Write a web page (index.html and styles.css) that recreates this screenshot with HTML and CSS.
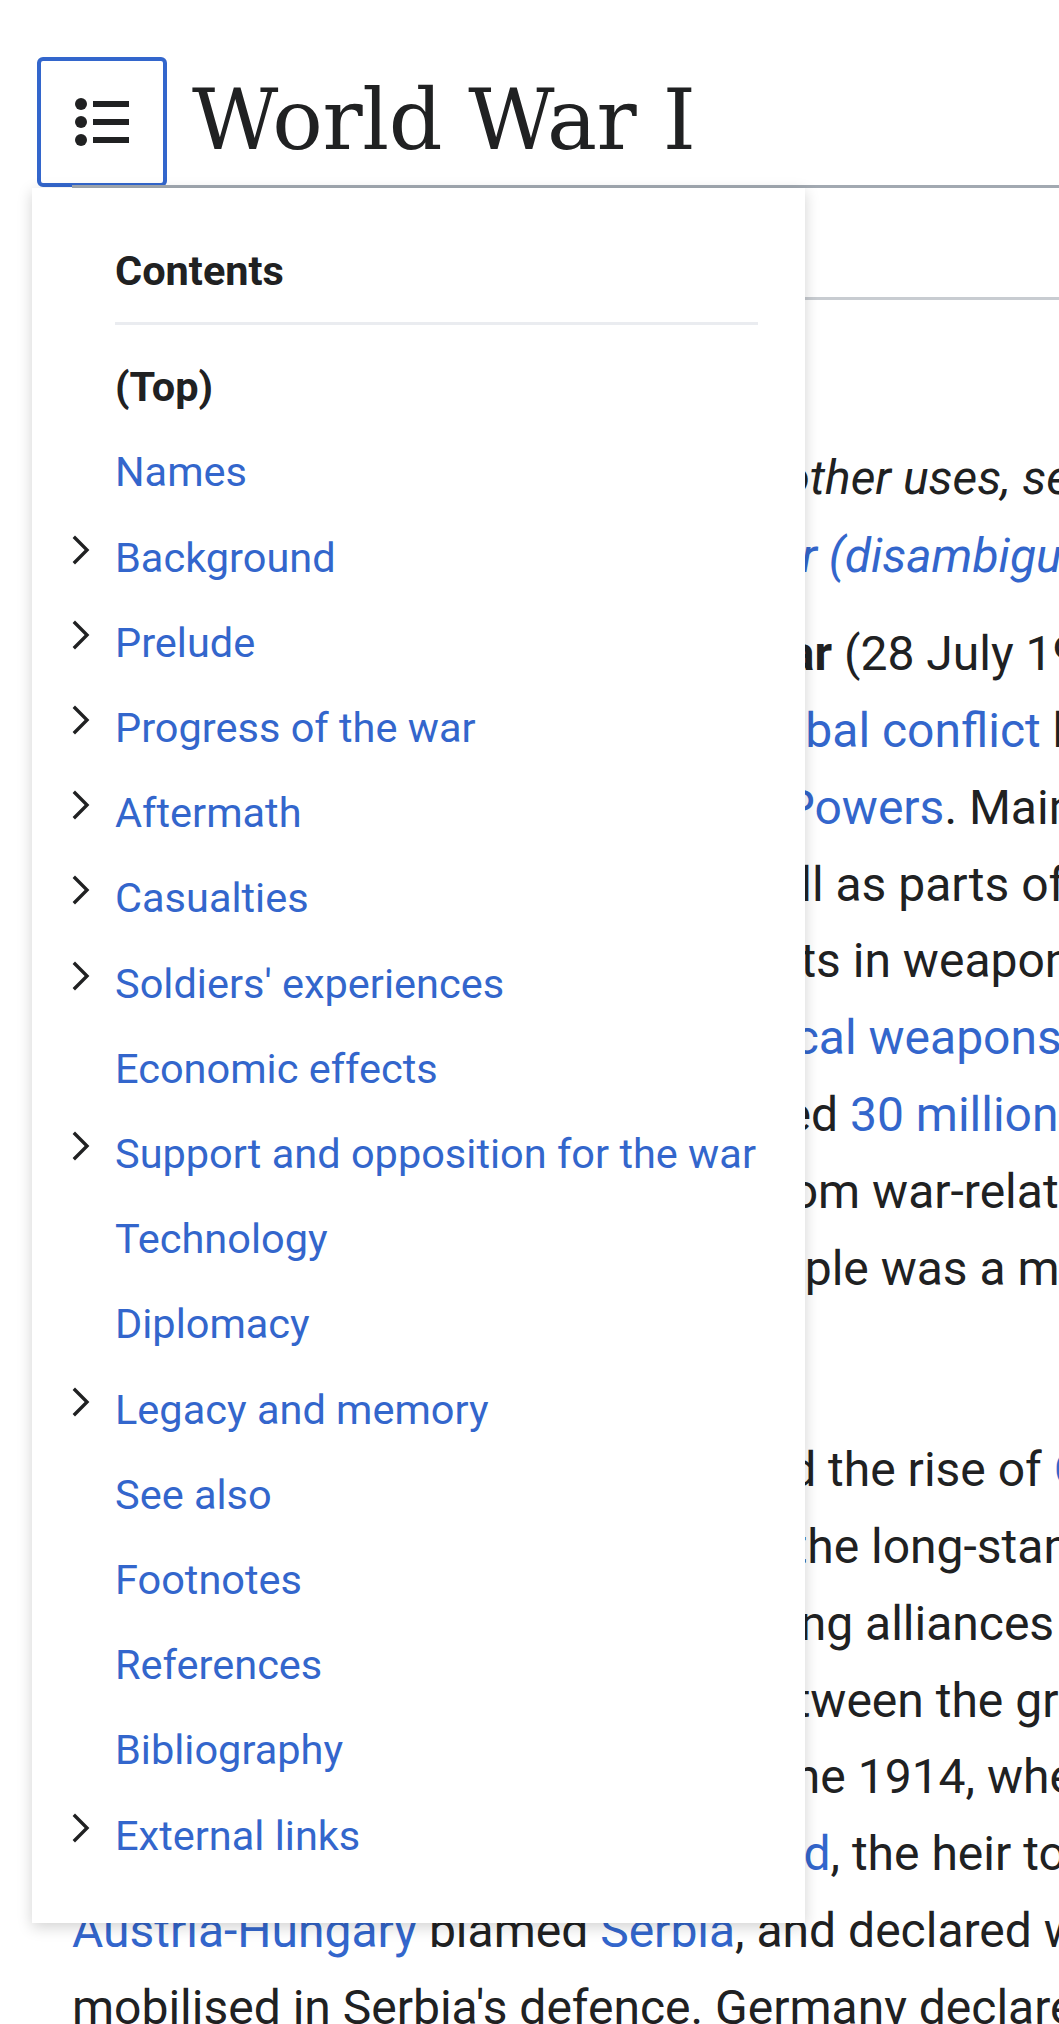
FILE: index.html
```html
<!DOCTYPE html>
<html lang="en">
<head>
<meta charset="utf-8">
<title>World War I - Wikipedia</title>

<link rel="stylesheet" href="styles.css">
</head>

<body>
<div class="page">

	<!-- title -->
	<header class="title-bar">
		<button class="toc-button" type="button" title="Hide contents">
			<svg viewBox="0 0 20 20" width="60" height="60" aria-hidden="true">
				<circle cx="3" cy="4" r="2"/>
				<circle cx="3" cy="10" r="2"/>
				<circle cx="3" cy="16" r="2"/>
				<path d="M7 3h12v2H7zm0 6h12v2H7zm0 6h12v2H7z"/>
			</svg>
		</button>
		<h1 class="title">World War I</h1>
	</header>

	<div class="tabs"></div>

	<!-- contents dropdown -->
	<nav class="toc">
		<h2 class="toc-title">Contents</h2>
		<ul class="toc-list">
			<li class="toc-top"><span class="toc-toggle"></span><a href="#">(Top)</a></li>
			<li><span class="toc-toggle"></span><a href="#Names">Names</a></li>
			<li><span class="toc-toggle"><svg viewBox="0 0 20 20"><path d="M4.75 2.5 12.25 10l-7.5 7.5 1.5 1.5 9-9-9-9z"/></svg></span><a href="#Background">Background</a></li>
			<li><span class="toc-toggle"><svg viewBox="0 0 20 20"><path d="M4.75 2.5 12.25 10l-7.5 7.5 1.5 1.5 9-9-9-9z"/></svg></span><a href="#Prelude">Prelude</a></li>
			<li><span class="toc-toggle"><svg viewBox="0 0 20 20"><path d="M4.75 2.5 12.25 10l-7.5 7.5 1.5 1.5 9-9-9-9z"/></svg></span><a href="#Progress_of_the_war">Progress of the war</a></li>
			<li><span class="toc-toggle"><svg viewBox="0 0 20 20"><path d="M4.75 2.5 12.25 10l-7.5 7.5 1.5 1.5 9-9-9-9z"/></svg></span><a href="#Aftermath">Aftermath</a></li>
			<li><span class="toc-toggle"><svg viewBox="0 0 20 20"><path d="M4.75 2.5 12.25 10l-7.5 7.5 1.5 1.5 9-9-9-9z"/></svg></span><a href="#Casualties">Casualties</a></li>
			<li><span class="toc-toggle"><svg viewBox="0 0 20 20"><path d="M4.75 2.5 12.25 10l-7.5 7.5 1.5 1.5 9-9-9-9z"/></svg></span><a href="#Soldiers'_experiences">Soldiers' experiences</a></li>
			<li><span class="toc-toggle"></span><a href="#Economic_effects">Economic effects</a></li>
			<li><span class="toc-toggle"><svg viewBox="0 0 20 20"><path d="M4.75 2.5 12.25 10l-7.5 7.5 1.5 1.5 9-9-9-9z"/></svg></span><a href="#Support_and_opposition_for_the_war">Support and opposition for the war</a></li>
			<li><span class="toc-toggle"></span><a href="#Technology">Technology</a></li>
			<li><span class="toc-toggle"></span><a href="#Diplomacy">Diplomacy</a></li>
			<li><span class="toc-toggle"><svg viewBox="0 0 20 20"><path d="M4.75 2.5 12.25 10l-7.5 7.5 1.5 1.5 9-9-9-9z"/></svg></span><a href="#Legacy_and_memory">Legacy and memory</a></li>
			<li><span class="toc-toggle"></span><a href="#See_also">See also</a></li>
			<li><span class="toc-toggle"></span><a href="#Footnotes">Footnotes</a></li>
			<li><span class="toc-toggle"></span><a href="#References">References</a></li>
			<li><span class="toc-toggle"></span><a href="#Bibliography">Bibliography</a></li>
			<li><span class="toc-toggle"><svg viewBox="0 0 20 20"><path d="M4.75 2.5 12.25 10l-7.5 7.5 1.5 1.5 9-9-9-9z"/></svg></span><a href="#External_links">External links</a></li>
		</ul>
	</nav>

	<!-- article -->
	<main class="content">
		<div class="tagline">From Wikipedia, the free encyclopedia</div>

		<div class="hatnote">
			"Great War" redirects here. For other uses, see <a href="#">Great War<br>
			(disambiguation)</a> and <a href="#">World War (disambiguation)</a>.
		</div>

		<p>
			<b>World War I</b><sup class="ref">[a]</sup> or the <b>First World War</b> (28 July 1914 – 11 November 1918), also<br>
			known as the <b>Great War</b>, was a <a href="#">global conflict</a> between two coalitions: the<br>
			<a href="#">Allies</a>, or <a href="#">Entente</a>, and the <a href="#">Central Powers</a>. Main areas of conflict included<br>
			Europe and the <a href="#">Middle East</a>, as well as parts of <a href="#">Africa</a> and the <a href="#">Asia-Pacific</a>.<br>
			The war saw decisive developments in weaponry including <a href="#">tanks</a>, <a href="#">aircraft</a>,<br>
			<a href="#">artillery</a>, <a href="#">machine guns</a>, and <a href="#">chemical weapons</a>. One of the deadliest conflicts<br>
			in history, it resulted in an estimated <a href="#">30 million military casualties</a>, plus<br>
			another 8 million civilian deaths from war-related causes and <a href="#">genocide</a>. The<br>
			movement of vast numbers of people was a major factor in the deadly <a href="#">Spanish flu</a><br>
			<a href="#">pandemic</a>.
		</p>

		<p>
			The causes of the conflict included the rise of <a href="#">Germany</a> and <a href="#">decline of the<br>
			Ottoman Empire</a>, which disturbed the long-standing <a href="#">balance of power</a> in Europe, as well as<br>
			rising nationalism, plus the opposing alliances of the era, imperial ambitions, economic competition<br>
			and rivalry. Increasing tensions between the great powers and in the <a href="#">Balkans</a><br>
			reached a breaking point on 28 June 1914, when a <a href="#">Bosnian Serb</a> named <a href="#">Gavrilo Princip</a><br>
			killed the <a href="#">Archduke Franz Ferdinand</a>, the heir to the Austro-Hungarian throne.<br>
			<a href="#">Austria-Hungary</a> blamed <a href="#">Serbia</a>, and declared war on 28 July. After <a href="#">Russia</a><br>
			mobilised in Serbia's defence. Germany declared war on Russia and France, who had an alliance.
		</p>
	</main>

</div>
</body>
</html>
```

FILE: styles.css
```css
html,
body {
	margin: 0;
	overflow: hidden;
	background: #fff;
}

body {
	font-family: Roboto, "Liberation Sans", sans-serif;
	color: #202122;
}

a {
	color: #3366cc;
	text-decoration: none;
}

.page {
	position: relative;
	width: 1800px;
	padding-top: 57px;
}

/* title */
.title-bar {
	position: relative;
	display: flex;
	align-items: flex-end;
	padding-left: 37px;
}

.title-bar::after {
	content: "";
	position: absolute;
	left: 72px;
	right: 0;
	bottom: -1px;
	height: 3px;
	background: #a2a9b1;
}

.toc-button {
	display: flex;
	align-items: center;
	justify-content: center;
	flex: none;
	box-sizing: border-box;
	width: 130px;
	height: 130px;
	padding: 0;
	border: 4px solid #3366cc;
	border-radius: 6px;
	background: #fff;
	color: #202122;
}

.toc-button svg {
	fill: currentColor;
}

.title {
	margin: 0 0 0 25px;
	padding-bottom: 14px;
	font-family: "DejaVu Serif", "Liberation Serif", serif;
	font-size: 84px;
	font-weight: normal;
	letter-spacing: -0.4px;
	line-height: 1.25;
}

.tabs {
	height: 110px;
	margin-left: 72px;
	border-bottom: 3px solid #c8ccd1;
}

/* contents dropdown */
.toc {
	position: absolute;
	top: 188px;
	left: 32px;
	width: 773px;
	box-sizing: border-box;
	padding: 49px 47px 45px 83px;
	background: #fff;
	box-shadow: 0 4px 14px rgba(0, 0, 0, 0.18);
	font-size: 41.5px;
	line-height: 67.2px;
	white-space: nowrap;
}

.toc-title {
	margin: 0;
	padding-bottom: 18px;
	border-bottom: 3px solid #eaecf0;
	font-size: 41.5px;
	font-weight: bold;
	line-height: 67.2px;
}

.toc-list {
	list-style: none;
	margin: 19px 0 0;
	padding: 0;
}

.toc-list li {
	display: flex;
	align-items: flex-start;
	margin-left: -50px;
	padding: 9px 0;
}

.toc-toggle {
	flex: none;
	width: 32px;
	height: 32px;
	margin: 10px 18px 0 0;
}

.toc-toggle svg {
	display: block;
	width: 32px;
	height: 32px;
	fill: #202122;
}

.toc-top a {
	color: #202122;
	font-weight: bold;
}

/* article */
.content {
	padding: 24px 0 0 72px;
	font-size: 48px;
	line-height: 1.6;
	white-space: nowrap;
}

.tagline {
	font-size: 39px;
	line-height: 62.4px;
	margin-bottom: 52.4px;
}

.hatnote {
	font-style: italic;
	line-height: 78px;
	padding-left: 76.8px;
	margin-bottom: 21.4px;
}

.content p {
	margin: 0 0 48px;
}

.ref {
	font-size: 0.65em;
	line-height: 1;
	vertical-align: super;
}
```
